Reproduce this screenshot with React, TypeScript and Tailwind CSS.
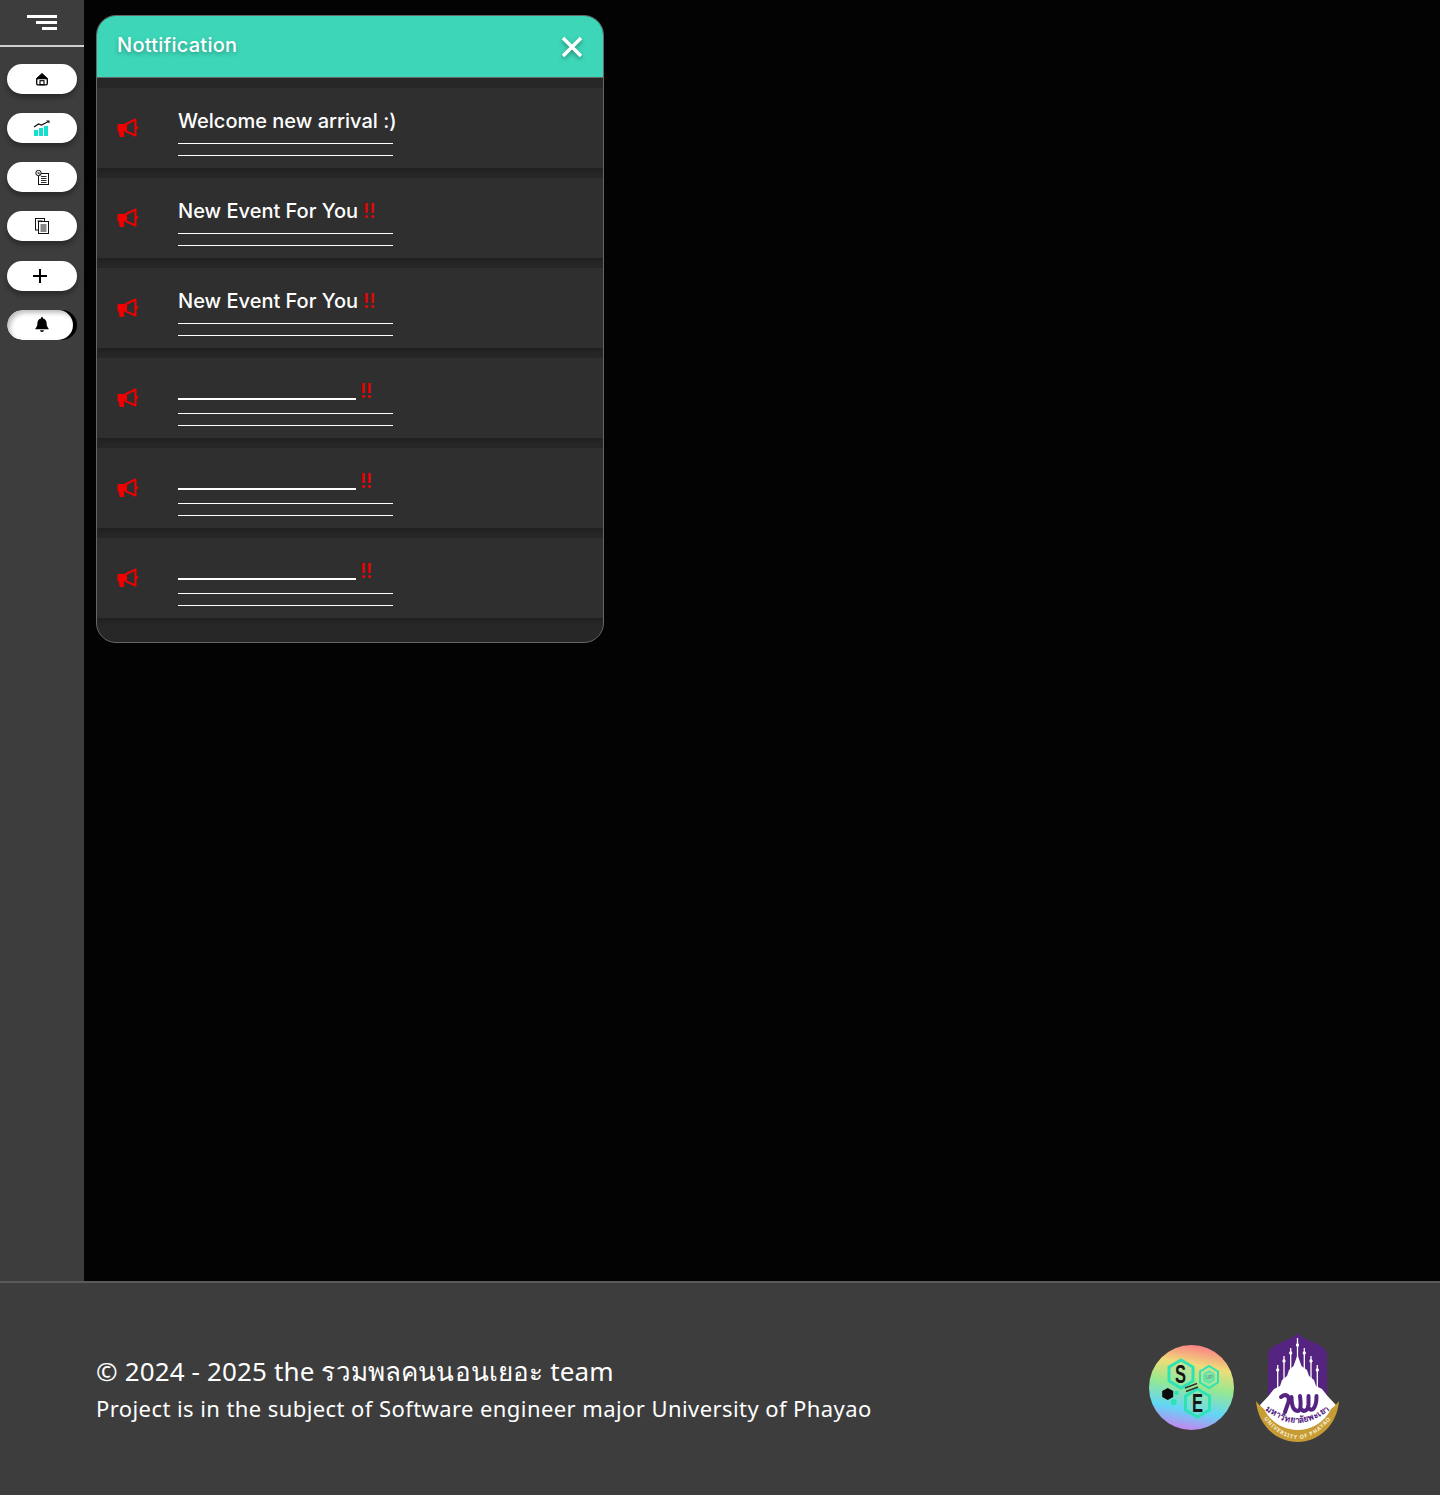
import React from 'react';

const notifications = [
  { title: 'Welcome new arrival :)', alert: false },
  { title: 'New Event For You', alert: true },
  { title: 'New Event For You', alert: true },
  { title: '', alert: true },
  { title: '', alert: true },
  { title: '', alert: true },
];

const HomeIcon = () => (
  <svg width="14" height="14" viewBox="0 0 14 14">
    <path d="M1.500 6.500 7 1.500l5.500 5z" fill="#000" stroke="#000" strokeLinejoin="round" />
    <rect x="1.700" y="6.500" width="10.600" height="6.300" rx="1.200" fill="none" stroke="#000" strokeWidth="1.300" />
    <rect x="5" y="8.700" width="4" height="4" fill="none" stroke="#000" strokeWidth="1.100" />
  </svg>
);

const ChartIcon = () => (
  <svg width="18" height="16" viewBox="0 0 18 16">
    <path d="M1 7 5.500 4l3 1L15 1.800" fill="none" stroke="#111" strokeWidth="1.200" />
    <path d="M13 .6h3.500v2.800z" fill="#111" />
    <rect x="1" y="10" width="4" height="6" fill="#12dfd0" />
    <rect x="6" y="8" width="4" height="8" fill="#12dfd0" />
    <rect x="11" y="6" width="4" height="10" fill="#12dfd0" />
  </svg>
);

const ReportIcon = () => (
  <svg width="15" height="15" viewBox="0 0 15 15" fill="none" stroke="#111">
    <rect x="3.500" y="3.500" width="10" height="11" />
    <path d="M6 6.500h5.500M6 8.500h5.500M6 10.500h5.500M6 12.500h5.500" strokeWidth="0.900" />
    <circle cx="3.500" cy="3" r="2.700" fill="#fff" />
    <circle cx="3.500" cy="3" r="1.200" fill="#777" stroke="none" />
    <path d="M4 3.500 5.800 5.300" />
  </svg>
);

const CopyIcon = () => (
  <svg width="14" height="16" viewBox="0 0 14 16" fill="#fff" stroke="#111" strokeWidth="1">
    <rect x="0.500" y="0.500" width="9" height="11.500" />
    <path d="M2.500 3h5" />
    <rect x="3.500" y="3.500" width="10" height="12" />
    <path d="M5.500 7h6M5.500 9h6M5.500 11h6M5.500 13h6" />
  </svg>
);

const BellIcon = () => (
  <svg width="14" height="15" viewBox="0 0 14 15" fill="#000" className="ml-[3px] -mt-[2px]">
    <path d="M7 0a1 1 0 0 1 1 1v.6c2.400.5 3.600 2.400 3.600 4.700 0 2.600.8 3.800 2 5.200v.8H.4v-.8c1.200-1.400 2-2.600 2-5.200C2.400 4 3.600 2.100 6 1.600V1a1 1 0 0 1 1-1z" />
    <path d="M5 13.300h4a2 1.700 0 0 1-4 0z" />
  </svg>
);

// solid body and handle, hollow cone towards the right
const MegaphoneIcon = () => (
  <svg width="21" height="20" viewBox="0 0 21 20" className="mt-[30px] shrink-0">
    <path d="M1 6.500h7.500V13H6l.9 5.500H3L2.300 13H1z" fill="#f00000" stroke="#f00000" strokeLinejoin="round" />
    <path d="M9 6 18.500 1.500v16L9 13.300z" fill="none" stroke="#f00000" strokeWidth="2" strokeLinejoin="round" />
    <rect x="19" y="8" width="2" height="3" rx="1" fill="#f00000" />
  </svg>
);

// round rainbow badge of the SE course
const SeLogo = () => (
  <svg width="85" height="85" viewBox="0 0 85 85">
    <defs>
      <linearGradient id="seBand" x1="0.6" y1="0" x2="0.42" y2="1">
        <stop offset="0" stopColor="#fb7d86" />
        <stop offset="0.24" stopColor="#efdc78" />
        <stop offset="0.48" stopColor="#97e88f" />
        <stop offset="0.76" stopColor="#62d6f6" />
        <stop offset="1" stopColor="#c684f0" />
      </linearGradient>
    </defs>
    <circle cx="42.500" cy="42.500" r="42.500" fill="url(#seBand)" />
    <polygon points="32,15 44,22 44,36 32,43 20,36 20,22" fill="#8fe8c0" fillOpacity="0.35" stroke="#2de3b5" strokeWidth="3" />
    <polygon points="48.500,44 60.500,51 60.500,65 48.500,72 36.500,65 36.500,51" fill="#8fe8c0" fillOpacity="0.35" stroke="#2de3b5" strokeWidth="3" />
    <polygon points="60,21 69,26.500 69,37.500 60,43 51,37.500 51,26.500" fill="#8fe8c0" fillOpacity="0.35" stroke="#2de3b5" strokeWidth="2" />
    <polygon points="60,26 65,29 65,35 60,38 55,35 55,29" fill="#2de3b5" fillOpacity="0.35" stroke="#2de3b5" strokeWidth="1" />
    <text x="60" y="34" textAnchor="middle" fontFamily="'Liberation Sans', sans-serif" fontSize="5" fill="#3a8f7c">UP</text>
    <text transform="translate(31.500 38) scale(0.66 1)" textAnchor="middle" fontFamily="'Liberation Sans', sans-serif" fontWeight="700" fontSize="25" fill="#161616">S</text>
    <text transform="translate(48.500 67) scale(0.66 1)" textAnchor="middle" fontFamily="'Liberation Sans', sans-serif" fontWeight="700" fontSize="25" fill="#161616">E</text>
    <path d="M36 43l12-4.500M37 46.500l12-4.500" stroke="#333" strokeWidth="1.400" />
    <polygon points="18.700,43 24.200,46 24.200,52 18.700,55 13.200,52 13.200,46" fill="#0c0c0c" />
    <circle cx="27.500" cy="48" r="2.200" fill="#2de3b5" />
    <circle cx="24.700" cy="57" r="3" fill="#2de3b5" />
  </svg>
);

// purple university seal with the white temple and the gold ribbon
const UpLogo = () => (
  <svg width="85" height="110" viewBox="0 0 85 110">
    <defs>
      <path id="upRibbonTh" d="M7 74Q42.500 106 78 74" />
      <path id="upRibbonEn" d="M5 81Q42.500 131 80 81" />
    </defs>
    <path d="M42.500 0C46 4 53 7 60 10c8 3 12 7 12 13v46H13V23c0-6 4-10 12-13 7-3 14.500-6 17.500-10z" fill="#552481" />
    <g stroke="#fff" strokeWidth="1.300" fill="#fff">
      <path d="M42.500 5v24M35.700 15v24M49.300 15v24M29 23v24M56 23v24M22.700 32v26M62.300 32v26" />
      <circle cx="35.700" cy="20" r="1" />
      <circle cx="49.300" cy="20" r="1" />
      <circle cx="29" cy="28" r="1" />
      <circle cx="56" cy="28" r="1" />
      <circle cx="22.700" cy="37" r="1" />
      <circle cx="62.300" cy="37" r="1" />
      <circle cx="42.500" cy="12" r="1" />
    </g>
    <path d="M42.500 22l4 11 5.500 4 2 6 5 4 2 6 6 3 5.500 7 8.500 9C74 90 58 98 42.500 98S11 90 5 72l8.500-9L19 56l6-3 2-6 5-4 2-6 4.500-4z" fill="#fff" />
    <path d="M1 68c2 24 20 41 41.500 41S82 92 84 68c-4 5-5.500 6-8 8-7 14-20 21-33.500 21S16 90 9 76c-2.500-2-4-3-8-8z" fill="#c89c34" />
    <path d="M26 64c5-4 9-1 7.500 5L30 79M36.500 64c0 8 2 14 6.500 14 3 0 3-8 2-15M45.500 75c3 5 7 3 8-3V63M53.500 75c3 4 8 1 8-12" fill="none" stroke="#552481" strokeWidth="4" strokeLinecap="round" />
    <text fontFamily="'Noto Sans', sans-serif" fontSize="8.500" fontWeight="700" fill="#552481">
      <textPath href="#upRibbonTh" startOffset="50%" textAnchor="middle">มหาวิทยาลัยพะเยา</textPath>
    </text>
    <text fontFamily="'Noto Sans', sans-serif" fontSize="5.500" fontWeight="700" fill="#f7efd8" letterSpacing="0.800">
      <textPath href="#upRibbonEn" startOffset="50%" textAnchor="middle">UNIVERSITY OF PHAYAO</textPath>
    </text>
  </svg>
);

const NavPill = ({ children, className = '' }: { children: React.ReactNode; className?: string }) => (
  <button className={`flex h-[30px] w-[70px] items-center justify-center rounded-full bg-white shadow-[0_4px_5px_rgba(0,0,0,0.3)] ${className}`}>
    {children}
  </button>
);

const Sidebar = () => (
  <aside className="flex w-[84px] shrink-0 flex-col bg-[#3d3d3d]">
    <div className="flex h-[47px] flex-col items-end gap-[3px] border-b-2 border-[#cfcfcf] pt-[15px] pr-[27px]">
      <span className="h-[3px] w-[30px] bg-white" />
      <span className="h-[3px] w-[21px] bg-white" />
      <span className="h-[3px] w-[15px] bg-white" />
    </div>
    <nav className="flex flex-col gap-[19px] pt-[17px] pl-[7px]">
      <NavPill><HomeIcon /></NavPill>
      <NavPill><ChartIcon /></NavPill>
      <NavPill><ReportIcon /></NavPill>
      <NavPill><CopyIcon /></NavPill>
      <NavPill className="mt-px">
        <svg width="16" height="16" viewBox="0 0 16 16" className="-ml-1" stroke="#000" strokeWidth="2"><path d="M8 1v14M1 8h14" /></svg>
      </NavPill>
      {/* active item: pressed white pill with a dark crescent on its right */}
      <div className="h-[30px] w-[70px] overflow-hidden rounded-full bg-black">
        <div className="flex h-full w-[66px] items-center justify-center rounded-full bg-white shadow-[inset_3px_3px_4px_rgba(0,0,0,0.25)]">
          <BellIcon />
        </div>
      </div>
    </nav>
  </aside>
);

const NotificationRow = ({ title, alert }: { title: string; alert: boolean }) => (
  <div className="flex h-20 items-start bg-[#2f2f2f] pl-5 shadow-[0_3px_5px_rgba(0,0,0,0.2)]">
    <MegaphoneIcon />
    <div className="ml-10 w-[215px]">
      <div className="flex h-[55px] items-start whitespace-nowrap pt-[21px] text-xl font-medium leading-6 text-white">
        {title ? (
          <span>{title}</span>
        ) : (
          <span className="mt-[19px] h-[2px] w-[178px] shrink-0 bg-white" />
        )}
        {alert && (
          <span className={title ? 'ml-[5px] text-[#f00000]' : 'ml-1 text-[#f00000]'}>!!</span>
        )}
      </div>
      <div className="h-px bg-white" />
      <div className="mt-[11px] h-px bg-white" />
    </div>
  </div>
);

export default function App() {
  return (
    <div className="flex h-[1495px] w-[1440px] flex-col bg-[#030303] font-['Inter',sans-serif]">
      <div className="flex h-[1281px] shrink-0">
        <Sidebar />
        <main className="pt-[15px] pl-3">
          <section className="w-[508px] overflow-hidden rounded-[20px] border border-[#666666] bg-[#272727]">
            <header className="flex h-[62px] items-center justify-between border-b border-[#666666] bg-[#3dd6b8] pr-[19px] pl-5">
              <h1 className="-mt-1 text-xl leading-6 font-medium tracking-[0.25px] text-white [text-shadow:0_2px_4px_rgba(0,0,0,0.3)]">Nottification</h1>
              <svg width="24" height="24" viewBox="0 0 24 24" className="drop-shadow-[0_2px_2px_rgba(0,0,0,0.35)]" stroke="#fff" strokeWidth="3.500">
                <path d="M3 3l18 18M21 3 3 21" />
              </svg>
            </header>
            <div className="flex flex-col gap-[10px] pt-[10px] pb-6">
              {notifications.map((n, i) => (
                <NotificationRow key={i} title={n.title} alert={n.alert} />
              ))}
            </div>
          </section>
        </main>
      </div>
      <footer className="flex flex-1 items-center justify-between border-t-2 border-[#5a5a5a] bg-[#3d3d3d] pr-[100px] pl-[96px] font-['Noto_Sans',sans-serif] text-white">
        <div className="-mt-[2px]">
          <p className="text-[26px] leading-9 tracking-[0.14px]">© 2024 - 2025 the รวมพลคนนอนเยอะ team</p>
          <p className="mt-[3px] text-[22px] leading-8 tracking-[0.42px]">Project is in the subject of Software engineer major University of Phayao</p>
        </div>
        <div className="-mt-[3px] flex items-start gap-[21px]">
          <div className="mt-3">
            <SeLogo />
          </div>
          <UpLogo />
        </div>
      </footer>
    </div>
  );
}
